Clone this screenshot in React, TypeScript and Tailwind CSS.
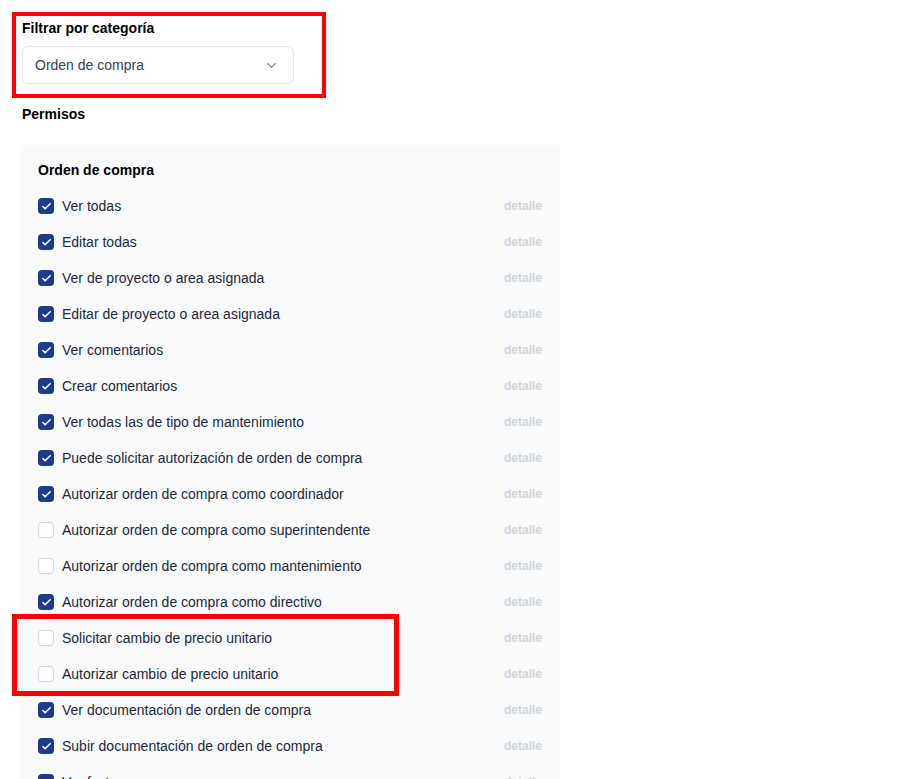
import { ChevronDown, Check } from 'lucide-react';

type Permiso = { label: string; checked: boolean };

const PERMISOS: Permiso[] = [
  { label: 'Ver todas', checked: true },
  { label: 'Editar todas', checked: true },
  { label: 'Ver de proyecto o area asignada', checked: true },
  { label: 'Editar de proyecto o area asignada', checked: true },
  { label: 'Ver comentarios', checked: true },
  { label: 'Crear comentarios', checked: true },
  { label: 'Ver todas las de tipo de mantenimiento', checked: true },
  { label: 'Puede solicitar autorización de orden de compra', checked: true },
  { label: 'Autorizar orden de compra como coordinador', checked: true },
  { label: 'Autorizar orden de compra como superintendente', checked: false },
  { label: 'Autorizar orden de compra como mantenimiento', checked: false },
  { label: 'Autorizar orden de compra como directivo', checked: true },
  { label: 'Solicitar cambio de precio unitario', checked: false },
  { label: 'Autorizar cambio de precio unitario', checked: false },
  { label: 'Ver documentación de orden de compra', checked: true },
  { label: 'Subir documentación de orden de compra', checked: true },
  { label: 'Ver facturas', checked: true },
];

export default function App() {
  return (
    <div
      className="relative min-h-screen bg-white text-[#111827]"
      style={{ fontFamily: '"Liberation Sans", Arial, sans-serif' }}
    >
      {/* Annotation boxes */}
      <div className="pointer-events-none absolute left-[12px] top-[12px] h-[86px] w-[314px] border-[4px] border-[#ff0000]" />
      <div className="pointer-events-none absolute left-[12px] top-[614px] h-[82px] w-[387px] border-[5px] border-[#ff0000]" />

      <div className="pt-[19px]">
        {/* Filter */}
        <div className="pl-[22px]">
          <label className="block text-[14px] font-bold leading-[18px] text-black">Filtrar por categoría</label>
          <div className="mt-[9px] flex h-[38px] w-[272px] items-center justify-between rounded-md border border-gray-200 bg-white pl-[12px] pr-[14px]">
            <span className="text-[14px] text-gray-700">Orden de compra</span>
            <ChevronDown size={15} strokeWidth={1.75} className="text-gray-500" />
          </div>
          <h3 className="mt-[21px] text-[14px] font-bold leading-[18px] text-black">Permisos</h3>
        </div>

        {/* Panel */}
        <div className="ml-[20px] mt-[22px] w-[540px] rounded bg-[#f8fafc] px-[18px] pt-[16px] pb-4">
          <h4 className="text-[14px] font-bold leading-[18px] text-black">Orden de compra</h4>
          <div className="mt-[9px]">
            {PERMISOS.map((p) => (
              <div key={p.label} className="flex h-[36px] items-center">
                {p.checked ? (
                  <span className="flex h-[16px] w-[16px] shrink-0 items-center justify-center rounded-[4px] bg-[#1e3a8a]">
                    <Check size={11} strokeWidth={3.5} className="text-white" />
                  </span>
                ) : (
                  <span className="h-[16px] w-[16px] shrink-0 rounded-[4px] border border-gray-300 bg-white" />
                )}
                <span className="ml-[8px] text-[14px] text-gray-800">{p.label}</span>
                <span className="ml-auto text-[12px] font-bold text-gray-300">detalle</span>
              </div>
            ))}
          </div>
        </div>
      </div>
    </div>
  );
}
